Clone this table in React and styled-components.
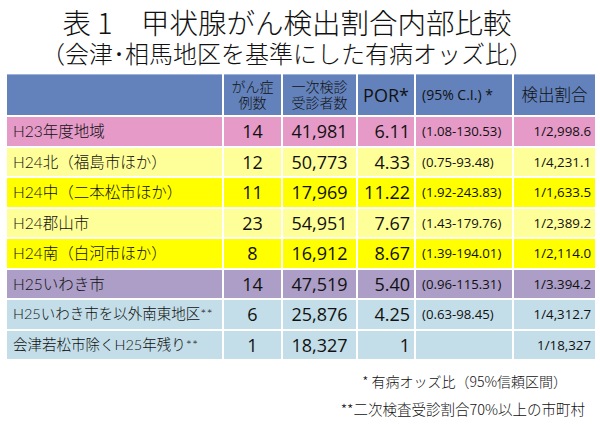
import React from "react";
import styled, { createGlobalStyle } from "styled-components";

const GlobalStyle = createGlobalStyle`
  body {
    margin: 0;
    background: #ffffff;
    font-family: Lato, "Noto Sans CJK JP", sans-serif;
    font-weight: 300;
    color: #111111;
  }
`;

const COLORS = {
  header: "#6382bb",
  pink: "#e59ac8",
  pale: "#ffff99",
  yellow: "#ffff00",
  purple: "#ac9ec7",
  blue: "#c3dee8",
};

const Page = styled.div`
  width: 600px;
  height: 425px;
  overflow: hidden;
`;

const TitleBlock = styled.div`
  display: flex;
  flex-direction: column;
  align-items: center;
  padding: 5px 26px 0 0;
  font-family: "Noto Sans CJK JP", sans-serif;
  font-weight: 300;
  color: #111;
`;

const Title = styled.div`
  font-size: 28.5px;
  line-height: 34px;
  white-space: pre;
`;

const SubTitle = styled.div`
  font-size: 24px;
  line-height: 28px;
  white-space: pre;
`;

const Table = styled.table`
  margin: 5px 0 0 5px;
  border-collapse: separate;
  border-spacing: 2px;
  table-layout: fixed;
  width: 592px;
`;

const HeadCell = styled.th`
  background: ${COLORS.header};
  height: 41px;
  padding: 0 ${(p) => p.$pad || 0}px;
  font-family: ${(p) => (p.$num ? `"Open Sans", sans-serif` : "inherit")};
  font-weight: ${(p) => (p.$num ? 400 : 300)};
  font-size: ${(p) => p.$size || 14}px;
  line-height: 16px;
  text-align: ${(p) => p.$align || "center"};
  box-shadow: inset 0 1px 0 #9db2dc;
  color: #111;
  box-sizing: border-box;
`;

const Row = styled.tr`
  background: ${(p) => p.$bg};
`;

const Cell = styled.td`
  height: 28.5px;
  padding: 0 ${(p) => p.$pad || 0}px;
  box-sizing: border-box;
  font-family: "Open Sans", sans-serif;
  font-size: ${(p) => p.$size || 18}px;
  font-weight: 400;
  text-align: ${(p) => p.$align || "center"};
  white-space: nowrap;
  overflow: hidden;
  line-height: 20px;
`;

const NameCell = styled(Cell)`
  font-family: Lato, "Noto Sans CJK JP", sans-serif;
  font-size: ${(p) => p.$size || 15.5}px;
  font-weight: 300;
  padding-left: 6px;
  text-align: left;
`;

const Footer = styled.div`
  margin-top: 6px;
  display: flex;
  flex-direction: column;
  align-items: flex-end;
  font-family: "Noto Sans CJK JP", sans-serif;
  font-weight: 300;
  color: #111;
`;

const Note = styled.div`
  font-size: ${(p) => p.$size}px;
  line-height: 28px;
  padding-right: ${(p) => p.$right}px;
  white-space: pre;
`;

const rows = [
  { name: "H23年度地域", bg: COLORS.pink, cases: "14", total: "41,981", por: "6.11", ci: "(1.08-130.53)", rate: "1/2,998.6" },
  { name: "H24北（福島市ほか）", bg: COLORS.pale, cases: "12", total: "50,773", por: "4.33", ci: "(0.75-93.48)", rate: "1/4,231.1" },
  { name: "H24中（二本松市ほか）", bg: COLORS.yellow, cases: "11", total: "17,969", por: "11.22", ci: "(1.92-243.83)", rate: "1/1,633.5" },
  { name: "H24郡山市", bg: COLORS.pale, cases: "23", total: "54,951", por: "7.67", ci: "(1.43-179.76)", rate: "1/2,389.2" },
  { name: "H24南（白河市ほか）", bg: COLORS.yellow, cases: "8", total: "16,912", por: "8.67", ci: "(1.39-194.01)", rate: "1/2,114.0" },
  { name: "H25いわき市", bg: COLORS.purple, cases: "14", total: "47,519", por: "5.40", ci: "(0.96-115.31)", rate: "1/3.394.2" },
  { name: "H25いわき市を以外南東地区**", small: true, bg: COLORS.blue, cases: "6", total: "25,876", por: "4.25", ci: "(0.63-98.45)", rate: "1/4,312.7" },
  { name: "会津若松市除くH25年残り**", small: true, bg: COLORS.blue, cases: "1", total: "18,327", por: "1", ci: "", rate: "1/18,327" },
];

export default function App() {
  return (
    <Page>
      <GlobalStyle />
      <TitleBlock>
        <Title>表 1　甲状腺がん検出割合内部比較</Title>
        <SubTitle>（会津･相馬地区を基準にした有病オッズ比）</SubTitle>
      </TitleBlock>

      <Table>
        <colgroup>
          <col style={{ width: 215 }} />
          <col style={{ width: 57 }} />
          <col style={{ width: 73 }} />
          <col style={{ width: 56 }} />
          <col style={{ width: 96 }} />
          <col style={{ width: 81 }} />
        </colgroup>
        <thead>
          <tr>
            <HeadCell />
            <HeadCell>
              がん症
              <br />
              例数
            </HeadCell>
            <HeadCell>
              一次検診
              <br />
              受診者数
            </HeadCell>
            <HeadCell $size={18} $num>
              POR*
            </HeadCell>
            <HeadCell $size={14} $align="left" $pad={6} $num>
              (95% C.I.) *
            </HeadCell>
            <HeadCell $size={16.5}>検出割合</HeadCell>
          </tr>
        </thead>
        <tbody>
          {rows.map((r) => (
            <Row key={r.name} $bg={r.bg}>
              <NameCell $size={r.small ? 14.5 : 15.5}>{r.name}</NameCell>
              <Cell>{r.cases}</Cell>
              <Cell>{r.total}</Cell>
              <Cell $align="right" $pad={4}>
                {r.por}
              </Cell>
              <Cell $align="left" $pad={6} $size={13.2}>
                {r.ci}
              </Cell>
              <Cell $align="right" $pad={4} $size={13.3}>
                {r.rate}
              </Cell>
            </Row>
          ))}
        </tbody>
      </Table>

      <Footer>
        <Note $size={14} $right={33}>* 有病オッズ比（95%信頼区間）</Note>
        <Note $size={14.5} $right={15}>**二次検査受診割合70%以上の市町村</Note>
      </Footer>
    </Page>
  );
}
